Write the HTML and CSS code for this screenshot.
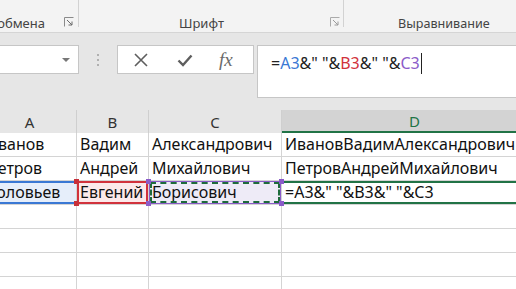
FILE: index.html
```html
<!DOCTYPE html>
<html lang="ru">
<head>
    <meta charset="UTF-8">
    <title>Excel - сцепление</title>
    <link rel="stylesheet" href="styles.css">
</head>
<body>
    <header class="ribbon">
        <div class="grupo grupo-buffer">
            <span class="rotulo">Буфер обмена</span>
            <svg class="lancador" width="10" height="10" viewBox="0 0 10 10"><path d="M0.5 9.5V0.5H9.5" fill="none" stroke="#8a8a8a"/><path d="M3 3L8 8M8 4.5V8H4.5" fill="none" stroke="#6a6a6a"/></svg>
        </div>
        <div class="grupo grupo-fonte">
            <span class="rotulo">Шрифт</span>
            <svg class="lancador" width="10" height="10" viewBox="0 0 10 10"><path d="M0.5 9.5V0.5H9.5" fill="none" stroke="#aaa"/><path d="M3 3L8 8M8 4.5V8H4.5" fill="none" stroke="#9a9a9a"/></svg>
        </div>
        <div class="grupo grupo-alinha">
            <span class="rotulo">Выравнивание</span>
        </div>
    </header>

    <div class="barra-formula">
        <div class="nome-caixa">
            <svg width="8" height="4" viewBox="0 0 8 4"><path d="M0 0H8L4 4Z" fill="#777"/></svg>
        </div>
        <div class="pontos"><i></i><i></i><i></i></div>
        <div class="botoes">
            <svg width="16" height="16" viewBox="0 0 16 16"><path d="M2 2L14 14M14 2L2 14" stroke="#5e5e5e" stroke-width="1.6"/></svg>
            <svg width="16" height="16" viewBox="0 0 16 16"><path d="M1.5 8.5L6 13L14.5 3.5" fill="none" stroke="#5e5e5e" stroke-width="2.4"/></svg>
            <span class="fx">fx</span>
        </div>
        <div class="entrada">
            <span>=<b class="ref-a">A3</b>&amp;" "&amp;<b class="ref-b">B3</b>&amp;" "&amp;<b class="ref-c">C3</b></span><span class="cursor"></span>
        </div>
    </div>

    <main class="planilha">
        <div class="cab">A</div>
        <div class="cab">B</div>
        <div class="cab">C</div>
        <div class="cab cab-ativo">D</div>

        <div class="cel">Иванов</div>
        <div class="cel">Вадим</div>
        <div class="cel">Александрович</div>
        <div class="cel">ИвановВадимАлександрович</div>

        <div class="cel">Петров</div>
        <div class="cel">Андрей</div>
        <div class="cel">Михайлович</div>
        <div class="cel">ПетровАндрейМихайлович</div>

        <div class="cel sel-a">Соловьев</div>
        <div class="cel sel-b">Евгений<i class="canto canto-vermelho cima"></i><i class="canto canto-vermelho baixo"></i></div>
        <div class="cel sel-c">Борисович<i class="canto canto-roxo cima"></i><i class="canto canto-roxo baixo"></i><i class="canto canto-roxo cima dir"></i><i class="canto canto-roxo baixo dir"></i></div>
        <div class="cel sel-d">=A3&amp;" "&amp;B3&amp;" "&amp;C3</div>

        <div class="cel"></div><div class="cel"></div><div class="cel"></div><div class="cel"></div>
        <div class="cel"></div><div class="cel"></div><div class="cel"></div><div class="cel"></div>
        <div class="cel"></div><div class="cel"></div><div class="cel"></div><div class="cel"></div>
        <div class="cel"></div><div class="cel"></div><div class="cel"></div><div class="cel"></div>
    </main>
</body>
</html>
```

FILE: styles.css
```css
body, html{
    margin: 0;
    padding: 0;
    width: 516px;
    height: 289px;
    overflow: hidden;
    background-color: #e6e6e6;
    font-family: "Noto Sans", Arial, sans-serif;
}
.ribbon{
    display: flex;
    height: 32px;
    background-color: #f3f3f3;
    border-bottom: 1px solid #d5d5d5;
}
.grupo{
    position: relative;
    height: 32px;
    display: flex;
    align-items: flex-end;
    overflow: hidden;
    box-sizing: border-box;
}
/* separador vertical entre grupos, mais curto que a faixa */
.grupo-buffer::after, .grupo-fonte::after{
    content: "";
    position: absolute;
    top: 0;
    right: 0;
    width: 1px;
    height: 27px;
    background-color: #d2d2d2;
}
.grupo-buffer{
    width: 79px;
    justify-content: flex-end;
}
.grupo-fonte{
    width: 265px;
}
.grupo-alinha{
    flex: 1;
}
.rotulo{
    font-size: 13px;
    color: #444;
    white-space: nowrap;
    line-height: 17px;
    padding-bottom: 0;
}
.grupo-buffer .rotulo{
    margin-right: 34px;
}
.grupo-fonte .rotulo{
    margin-left: 100px;
}
.grupo-alinha .rotulo{
    margin-left: 54px;
    font-size: 12.6px;
}
.lancador{
    position: absolute;
    bottom: 5px;
    right: 5px;
}
.grupo-fonte .lancador{
    right: 4px;
}

.barra-formula{
    display: flex;
    align-items: flex-start;
    height: 77px;
    padding-top: 12px;
    box-sizing: border-box;
}
.nome-caixa{
    width: 79px;
    height: 29px;
    background-color: white;
    border: 1px solid #c6c6c6;
    border-left: none;
    box-sizing: border-box;
    display: flex;
    align-items: center;
    justify-content: flex-end;
    padding-right: 8px;
}
.pontos{
    width: 38px;
    height: 29px;
    display: flex;
    flex-direction: column;
    align-items: center;
    justify-content: center;
    gap: 3px;
}
.pontos i{
    width: 2px;
    height: 2px;
    background-color: #b0b0b0;
}
.botoes{
    width: 137px;
    height: 29px;
    background-color: white;
    border: 1px solid #c6c6c6;
    box-sizing: border-box;
    display: flex;
    align-items: center;
    padding-left: 15px;
    gap: 28px;
}
.fx{
    font-family: "Liberation Serif", serif;
    font-style: italic;
    font-size: 19px;
    color: #6a6a6a;
    margin-left: -2px;
}
.entrada{
    flex: 1;
    margin-left: 3px;
    height: 53px;
    background-color: white;
    border: 1px solid #c6c6c6;
    border-right: none;
    box-sizing: border-box;
    padding: 7px 0 0 13px;
    font-size: 16px;
    line-height: 20px;
    color: #222;
    display: flex;
    align-items: flex-start;
}
.entrada b{
    font-weight: normal;
}
.ref-a{ color: #3a78d4; }
.ref-b{ color: #d1323c; }
.ref-c{ color: #8b5cc9; }
.cursor{
    width: 1px;
    height: 21px;
    background-color: #222;
    margin-left: 1px;
}

.planilha{
    display: grid;
    grid-template-columns: 94px 72px 133px 266px;
    grid-template-rows: 23px repeat(7, 24px);
    margin-left: -17px;
}
.cab{
    display: flex;
    align-items: center;
    justify-content: center;
    font-size: 15px;
    color: #333;
    border-right: 1px solid #cfcfcf;
    box-sizing: border-box;
}
.cab-ativo{
    background-color: #d3d3d3;
    color: #217346;
    border-bottom: 2px solid #217346;
}
.cel{
    position: relative;
    background-color: white;
    border-right: 1px solid #d4d4d4;
    border-bottom: 1px solid #d4d4d4;
    box-sizing: border-box;
    font-size: 16px;
    line-height: 23px;
    padding-left: 3px;
    white-space: nowrap;
    color: #111;
}
.sel-a{
    background-color: #e6eefa;
    box-shadow: inset 0 2px 0 #3a78d4, inset 0 -2px 0 #3a78d4;
}
.sel-b{
    background-color: #fbe9ea;
    box-shadow: inset 2px 2px 0 #d1323c, inset -2px -2px 0 #d1323c;
}
.sel-c{
    background-color: #eeebf7;
    box-shadow: inset 1px 1px 0 #8b5cc9, inset -1px -1px 0 #8b5cc9;
}
.sel-c::after{
    content: "";
    position: absolute;
    inset: 1px;
    border: 2px dashed #1e6b3c;
}
.sel-d{
    box-shadow: inset 0 2px 0 #217346, inset 0 -2px 0 #217346;
}
.canto{
    position: absolute;
    width: 5px;
    height: 5px;
    left: -3px;
    z-index: 2;
}
.canto.cima{ top: -2px; }
.canto.baixo{ bottom: -2px; }
.canto.dir{ left: auto; right: -3px; }
.canto-vermelho{ background-color: #c8303a; }
.canto-roxo{ background-color: #8b5cc9; }
```
